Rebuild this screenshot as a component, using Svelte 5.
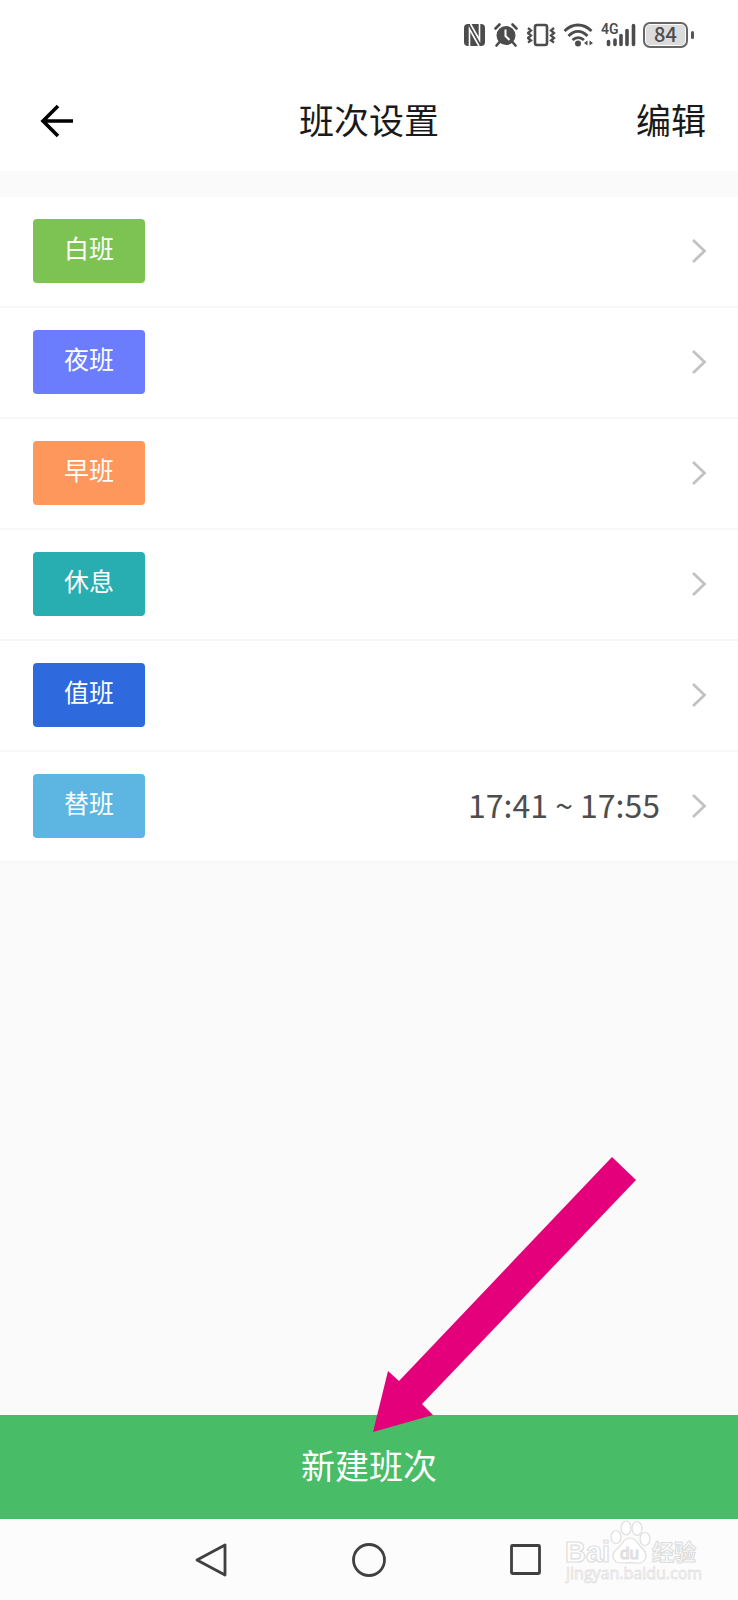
<script>
  const shifts = [
    { name: '白班', color: '#7dc353', time: '' },
    { name: '夜班', color: '#6b7dfc', time: '' },
    { name: '早班', color: '#fe975b', time: '' },
    { name: '休息', color: '#28adb0', time: '' },
    { name: '值班', color: '#2e69de', time: '' },
    { name: '替班', color: '#5cb6e1', time: '17:41 ~ 17:55' }
  ];
</script>

<div class="page">
  <div class="status">
    <svg width="24" height="24" viewBox="0 0 24 24">
      <rect y="1" width="21" height="22" rx="4" fill="#4c4c4c" />
      <path d="M5.500 23V6l9.500 17M15.500 1v16L6.500 1" fill="none" stroke="#fff" stroke-width="1.600" />
    </svg>
    <svg width="27" height="24" viewBox="0 0 27 24" fill="none" stroke="#4c4c4c">
      <circle cx="12" cy="12.500" r="9.500" fill="#4c4c4c" stroke="none" />
      <path d="M1.500 5.500l4-4M22.500 5.500l-4-4M5.500 19l-3 3.500M18.500 19l3 3.500" stroke-width="2.600" stroke-linecap="round" />
      <path d="M11.500 6.500v6.500l4 4" stroke="#fff" stroke-width="2" />
    </svg>
    <svg width="30" height="24" viewBox="0 0 30 24" fill="none" stroke="#4c4c4c">
      <rect x="8" y="2" width="12" height="20" rx="2" stroke-width="2.600" />
      <path d="M1 5l3 2.500-3 2.500 3 2.500-3 2.500 3 2.500-3 2M27 5l-3 2.500 3 2.500-3 2.500 3 2.500-3 2.500 3 2" stroke-width="2.300" />
    </svg>
    <svg width="32" height="24" viewBox="0 0 32 24" fill="none" stroke="#4c4c4c" stroke-width="2.800">
      <path d="M1.500 8c8-8 19-8 27 0M5.500 13c6-6 13-6 19 0M9.500 17c3.500-3 8-3 11.500 0" />
      <circle cx="15" cy="20.500" r="3" fill="#4c4c4c" stroke="none" />
      <path d="M24.500 17.500v5l-3.500-2.500zM26.500 17.500v5l3.500-2.500z" fill="#4c4c4c" stroke="none" />
    </svg>
    <svg class="signal" width="36" height="26" viewBox="0 0 36 26">
      <text x="0" y="12" font-size="14" font-weight="600" fill="#4c4c4c">4G</text>
      <path d="M7.500 19.500v3M14 18v4.500M20 13.500v9M26 8.500v14M32.500 3.500v19" stroke="#4c4c4c" stroke-width="3.600" stroke-linecap="round" />
    </svg>
    <div class="battery">84</div>
    <div class="nub"></div>
  </div>

  <header>
    <button class="back" aria-label="返回">
      <svg width="34" height="34" viewBox="0 0 34 34" fill="none" stroke="#000" stroke-width="3.600">
        <path d="M33 17H3M18 2L3 17l15 15" />
      </svg>
    </button>
    <h1>班次设置</h1>
    <button class="edit">编辑</button>
  </header>

  <ul>
    {#each shifts as shift}
      <li>
        <button class="row">
          <span class="tag" style="background: {shift.color}">{shift.name}</span>
          <span class="time">{shift.time}</span>
          <svg width="16" height="26" viewBox="0 0 16 26" fill="none" stroke="#c2c2c2" stroke-width="2.800">
            <path d="M2 2l11.500 11L2 24" />
          </svg>
        </button>
      </li>
    {/each}
  </ul>

  <div class="action">
    <button class="create">新建班次</button>
    <svg class="pointer" width="263" height="275" viewBox="0 0 263 275" fill="#e4007b">
      <path d="M239 0L263 23 49 247 60 258 0 275 15 214 26 224z" />
    </svg>
  </div>

  <nav>
    <button aria-label="后退">
      <svg width="36" height="36" viewBox="0 0 36 36"><path d="M31 3v30L3 18z" /></svg>
    </button>
    <button aria-label="主屏幕">
      <svg width="36" height="36" viewBox="0 0 36 36"><circle cx="18" cy="18" r="15.500" /></svg>
    </button>
    <button aria-label="最近任务">
      <svg width="36" height="36" viewBox="0 0 36 36"><rect x="3.500" y="3.500" width="28" height="28" rx="1" /></svg>
    </button>
    <svg class="mark" width="138" height="66" viewBox="0 0 138 66" fill="#fff" stroke="#dedede" stroke-width="1.200">
      <text x="1" y="42" font-size="29" font-weight="700">Bai</text>
      <ellipse cx="52" cy="17" rx="5" ry="6.500" />
      <ellipse cx="62" cy="8" rx="5" ry="7" />
      <ellipse cx="73" cy="8.500" rx="5" ry="7" />
      <ellipse cx="81" cy="19" rx="5" ry="6.500" />
      <path d="M66 18c-6 0-7 5-11 9s-7 6-6 10c1 5 5 6 9 6s10-1 14 0 9-1 10-6c1-4-2-7-5-10s-5-9-11-9z" />
      <text x="56" y="39" font-size="17">du</text>
      <text x="88" y="40" font-size="22" font-weight="700">经验</text>
      <text class="site" x="2" y="59" font-size="16">jingyan.baidu.com</text>
    </svg>
  </nav>
</div>

<style>
  :global(body) {
    margin: 0;
  }
  .page {
    min-height: 100vh;
    display: flex;
    flex-direction: column;
    background: #fafafa;
    color: #1a1a1a;
    font-family: "Noto Sans CJK SC", sans-serif;
  }
  button {
    border: 0;
    padding: 0;
    background: none;
    color: inherit;
    font: inherit;
    cursor: pointer;
  }
  svg {
    display: block;
    flex: none;
  }
  .status {
    display: flex;
    align-items: center;
    justify-content: flex-end;
    gap: 6px;
    height: 70px;
    padding-right: 44px;
    background: #fff;
  }
  .signal text {
    font-family: Roboto, sans-serif;
  }
  .battery {
    box-sizing: border-box;
    width: 45px;
    height: 26px;
    border: 2px solid #666;
    border-radius: 7px;
    background: #dcdcdc;
    box-shadow: inset 0 0 0 1px #fff;
    color: #4c4c4c;
    font-size: 20px;
    font-weight: 500;
    line-height: 20px;
    text-align: center;
  }
  .nub {
    width: 3px;
    height: 8px;
    margin-left: -3px;
    border-radius: 2px;
    background: #555;
  }
  header {
    display: grid;
    grid-template-columns: 1fr auto 1fr;
    align-items: center;
    height: 101px;
    padding: 0 32px;
    background: #fff;
  }
  .back {
    justify-self: start;
    padding-left: 8px;
  }
  h1 {
    margin: 0;
    padding-bottom: 4px;
    font-size: 35px;
    font-weight: 400;
    line-height: 50px;
  }
  .edit {
    justify-self: end;
    padding-bottom: 4px;
    font-size: 35px;
    line-height: 50px;
  }
  ul {
    margin: 26px 0 0;
    padding: 0;
    list-style: none;
    background: #fff;
  }
  li {
    border-bottom: 2px solid #f7f7f7;
  }
  .row {
    display: flex;
    align-items: center;
    width: 100%;
    padding: 22px 31px 23px 33px;
  }
  .tag {
    box-sizing: border-box;
    width: 112px;
    height: 64px;
    padding-bottom: 8px;
    border-radius: 4px;
    color: #fff;
    font-size: 25px;
    line-height: 56px;
  }
  .time {
    flex: 1;
    padding: 0 31px 4px 0;
    color: #4d4d4d;
    font-size: 32px;
    line-height: 48px;
    text-align: right;
  }
  .action {
    position: relative;
    margin-top: auto;
  }
  .create {
    display: block;
    width: 100%;
    height: 104px;
    padding-bottom: 6px;
    background: #49bc67;
    color: #fff;
    font-size: 34px;
  }
  .pointer {
    position: absolute;
    left: calc(50% + 4px);
    bottom: 87px;
    pointer-events: none;
  }
  nav {
    position: relative;
    display: grid;
    grid-template-columns: repeat(3, 1fr);
    height: 81px;
    padding: 0 18%;
    background: #fcfcfc;
  }
  nav button {
    display: grid;
    place-items: center;
  }
  nav button svg {
    fill: none;
    stroke: #404040;
    stroke-width: 2.8;
    stroke-linejoin: round;
  }
  .mark {
    position: absolute;
    right: 36px;
    top: 1px;
    pointer-events: none;
  }
  .mark text {
    font-family: "Liberation Sans", "Noto Sans CJK SC", sans-serif;
  }
  .mark .site {
    font-family: "Open Sans", sans-serif;
    stroke: #e2e2e2;
    stroke-width: 0.8;
  }
</style>
